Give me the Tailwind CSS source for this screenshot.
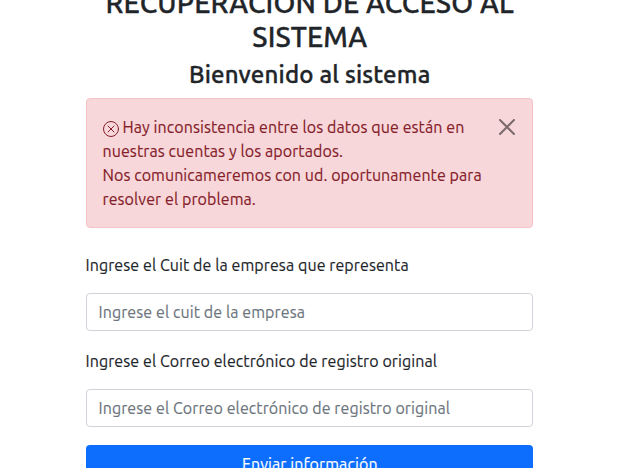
<!DOCTYPE html>
<html lang="es">
<head>
<meta charset="utf-8">
<title>Recuperación de acceso al sistema</title>
<script src="https://cdn.jsdelivr.net/npm/@tailwindcss/browser@4"></script>
</head>
<body class="h-[468px] overflow-hidden bg-white text-base tracking-[0.09px] text-[#212529] font-['Ubuntu','Noto_Sans',sans-serif] [-webkit-text-stroke:0.15px_currentColor]">
<main class="ml-[85.5px] -mt-[14px] flex w-[447px] flex-col">
  <h1 class="mb-2 flex flex-col items-center pl-[1.5px] whitespace-nowrap text-[28px] leading-[33.6px] font-medium tracking-[0.18px] [-webkit-text-stroke:0.35px_currentColor]"><span>RECUPERACIÓN DE ACCESO AL</span><span>SISTEMA</span></h1>
  <h2 class="mb-2 pl-[1.5px] text-center text-2xl leading-[28.8px] font-medium tracking-[0.18px] [-webkit-text-stroke:0.35px_currentColor]">Bienvenido al sistema</h2>
  <div class="flex h-[130px] justify-between rounded border border-[#f5c2c7] bg-[#f8d7da] p-4 text-[#842029]" role="alert">
    <p class="flex flex-col whitespace-nowrap leading-6">
      <span class="flex"><svg class="mt-[6px] mr-[4px] size-4" viewBox="0 0 16 16" fill="none" stroke="currentColor" stroke-linecap="round"><circle cx="8" cy="8" r="7.5"/><path d="M5 5l6 6M11 5l-6 6"/></svg><span>Hay inconsistencia entre los datos que están en</span></span>
      <span>nuestras cuentas y los aportados.</span>
      <span class="tracking-[0.07px]">Nos comunicameremos con ud. oportunamente para</span>
      <span>resolver el problema.</span>
    </p>
    <button class="mt-1 mr-px size-4 text-black opacity-50" aria-label="Cerrar"><svg class="size-4" viewBox="0 0 16 16" fill="none" stroke="currentColor" stroke-width="2" stroke-linecap="round"><path d="M1 1l14 14M15 1L1 15"/></svg></button>
  </div>
  <label class="mt-[25px] leading-6">Ingrese el Cuit de la empresa que representa</label>
  <div class="mt-4 flex h-[38px] items-center rounded border border-[#ced4da] px-3 text-[#6c757d]">Ingrese el cuit de la empresa</div>
  <label class="mt-[18px] leading-6">Ingrese el Correo electrónico de registro original</label>
  <div class="mt-4 flex h-[38px] items-center rounded border border-[#ced4da] px-3 text-[#6c757d]">Ingrese el Correo electrónico de registro original</div>
  <button class="mt-[18px] flex h-[38px] items-center justify-center rounded bg-[#0d6efd] pl-[1.5px] text-white">Enviar información</button>
</main>
</body>
</html>
